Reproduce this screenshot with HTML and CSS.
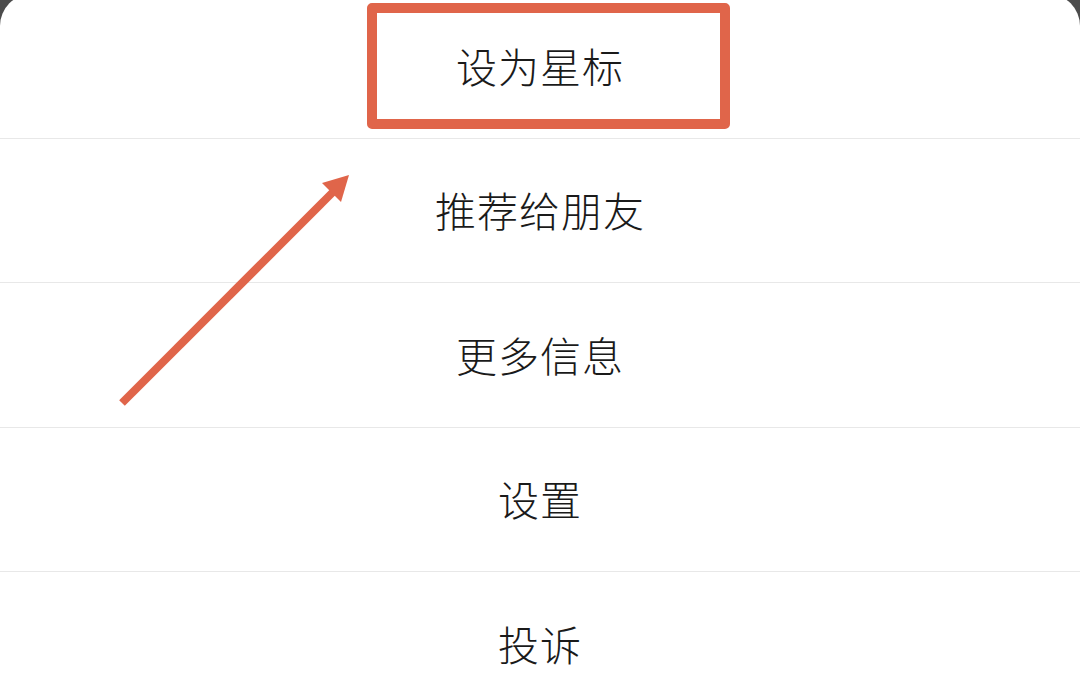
FILE: index.html
```html
<!DOCTYPE html>
<html lang="zh-CN">
<head>
<meta charset="utf-8">
<link rel="stylesheet" href="styles.css">
</head>
<body>
<div class="sheet">
  <div class="row">设为星标</div>
  <div class="row">推荐给朋友</div>
  <div class="row">更多信息</div>
  <div class="row">设置</div>
  <div class="row last">投诉</div>
</div>
<div class="highlight"></div>
<svg class="arrow" width="1080" height="694" viewBox="0 0 1080 694">
  <line x1="122" y1="403" x2="334" y2="191" stroke="#e0654a" stroke-width="8"/>
  <polygon points="349,175 322,183 341,202" fill="#e0654a"/>
</svg>
</body>
</html>
```
FILE: styles.css
```css
html, body {
  margin: 0;
  padding: 0;
  width: 1080px;
  height: 694px;
  overflow: hidden;
  background: #4c4c4c;
}
body {
  position: relative;
  font-family: "Noto Sans CJK SC", "Noto Sans", sans-serif;
}
.sheet {
  margin-top: -6px;
  height: 700px;
  background: #ffffff;
  border-radius: 32px 32px 0 0;
  display: flex;
  flex-direction: column;
}
.row {
  height: 144.5px;
  flex: none;
  box-sizing: border-box;
  border-bottom: 1px solid #e8e8e8;
  display: flex;
  align-items: center;
  justify-content: center;
  padding-bottom: 2px;
  font-size: 41px;
  font-weight: 300;
  letter-spacing: 1px;
  color: #1a1a1a;
}
.row.last {
  border-bottom: none;
}
.highlight {
  position: absolute;
  left: 367px;
  top: 3px;
  width: 343px;
  height: 106px;
  border: 10px solid #e0654a;
  border-radius: 5px;
}
.arrow {
  position: absolute;
  left: 0;
  top: 0;
}
```
